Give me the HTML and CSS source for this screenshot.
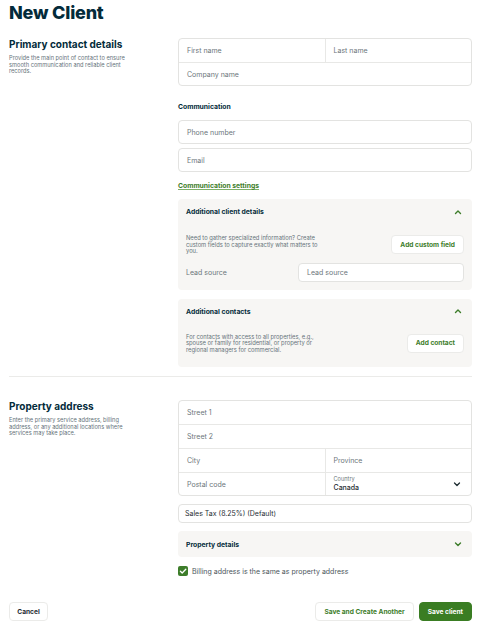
FILE: index.html
```html
<!DOCTYPE html>
<html lang="en">
<head>
<meta charset="utf-8">
<title>New Client</title>
<link rel="stylesheet" href="styles.css">
</head>
<body>
<div class="page">
  <h1 class="title">New Client</h1>

  <section class="section">
    <div class="intro">
      <h2 class="sec-title">Primary contact details</h2>
      <p class="sec-desc">Provide the main point of contact to ensure smooth communication and reliable client records.</p>
    </div>
    <div class="fields">
      <div class="group">
        <div class="row split">
          <div class="cell">First name</div>
          <div class="cell">Last name</div>
        </div>
        <div class="row"><div class="cell">Company name</div></div>
      </div>

      <div class="label">Communication</div>
      <div class="stack">
        <div class="input">Phone number</div>
        <div class="input">Email</div>
      </div>
      <a class="link" href="#">Communication settings</a>

      <div class="panel">
        <div class="panel-head">
          <span>Additional client details</span>
          <svg class="chev" viewBox="0 0 10 10"><path d="M2.5 6.5 L5 4 L7.5 6.5" fill="none" stroke="#3d7d2a" stroke-width="1.4" stroke-linecap="round" stroke-linejoin="round"/></svg>
        </div>
        <div class="panel-body">
          <p class="panel-desc desc-a">Need to gather specialized information? Create custom fields to capture exactly what matters to you.</p>
          <button class="btn btn-sec btn-custom">Add custom field</button>
        </div>
        <div class="lead">
          <span class="lead-label">Lead source</span>
          <div class="input small">Lead source</div>
        </div>
      </div>

      <div class="panel panel-2">
        <div class="panel-head">
          <span>Additional contacts</span>
          <svg class="chev" viewBox="0 0 10 10"><path d="M2.5 6.5 L5 4 L7.5 6.5" fill="none" stroke="#3d7d2a" stroke-width="1.4" stroke-linecap="round" stroke-linejoin="round"/></svg>
        </div>
        <div class="panel-body">
          <p class="panel-desc desc-b">For contacts with access to all properties, e.g., spouse or family for residential, or property or regional managers for commercial.</p>
          <button class="btn btn-sec">Add contact</button>
        </div>
      </div>
    </div>
  </section>

  <hr class="divider">

  <section class="section">
    <div class="intro">
      <h2 class="sec-title">Property address</h2>
      <p class="sec-desc">Enter the primary service address, billing address, or any additional locations where services may take place.</p>
    </div>
    <div class="fields">
      <div class="group">
        <div class="row"><div class="cell">Street 1</div></div>
        <div class="row"><div class="cell">Street 2</div></div>
        <div class="row split">
          <div class="cell">City</div>
          <div class="cell">Province</div>
        </div>
        <div class="row split">
          <div class="cell">Postal code</div>
          <div class="cell select">
            <div class="sel-text">
              <span class="sel-label">Country</span>
              <span class="sel-value">Canada</span>
            </div>
            <svg class="chev dark" viewBox="0 0 10 10"><path d="M2.5 4 L5 6.5 L7.5 4" fill="none" stroke="#1f2d33" stroke-width="1.3" stroke-linecap="round" stroke-linejoin="round"/></svg>
          </div>
        </div>
      </div>

      <div class="input tax">Sales Tax (8.25%) (Default)</div>

      <div class="panel panel-3">
        <div class="panel-head">
          <span>Property details</span>
          <svg class="chev" viewBox="0 0 10 10"><path d="M2.5 4 L5 6.5 L7.5 4" fill="none" stroke="#3d7d2a" stroke-width="1.4" stroke-linecap="round" stroke-linejoin="round"/></svg>
        </div>
      </div>

      <label class="check">
        <span class="box"><svg viewBox="0 0 10 10"><path d="M2.4 5.2 L4.2 7 L7.8 3.2" fill="none" stroke="#fff" stroke-width="1.3" stroke-linecap="round" stroke-linejoin="round"/></svg></span>
        <span>Billing address is the same as property address</span>
      </label>
    </div>
  </section>

  <footer class="footer">
    <button class="btn btn-cancel">Cancel</button>
    <div class="actions">
      <button class="btn btn-sec">Save and Create Another</button>
      <button class="btn btn-primary">Save client</button>
    </div>
  </footer>
</div>
</body>
</html>
```

FILE: styles.css
```css
* { box-sizing: border-box; }
html, body { margin: 0; padding: 0; background: #fff; }
body {
  font-family: Inter, "Noto Sans", "Liberation Sans", sans-serif;
  color: #032b3a;
  font-size: 7px;
}
.page { padding: 3px 8px 0 9px; }
.title {
  margin: 0;
  font-size: 18px;
  line-height: 20px;
  font-weight: 800;
  letter-spacing: -0.2px;
  color: #032b3a;
}
.section {
  display: grid;
  grid-template-columns: 1fr 294px;
  margin-top: 15px;
}
.intro { max-width: 128px; }
.sec-title {
  margin: 0;
  font-size: 10px;
  line-height: 12px;
  font-weight: 700;
  color: #032b3a;
}
.sec-desc {
  margin: 5px 0 0;
  font-size: 5.7px;
  line-height: 6.6px;
  color: #66737a;
}
.fields { display: flex; flex-direction: column; }
.group {
  border: 1px solid #e3e3e1;
  border-radius: 4px;
  background: #fff;
}
.row { display: flex; height: 24px; border-top: 1px solid #e8e8e6; }
.row:first-child { border-top: none; height: 23px; }
.row:last-child { height: 23px; }
.cell {
  flex: 1;
  display: flex;
  align-items: center;
  padding: 0 8px;
  color: #6c767b;
  font-size: 7px;
}
.split .cell + .cell { border-left: 1px solid #e8e8e6; }
.label {
  margin-top: 17px;
  font-size: 6.8px;
  font-weight: 700;
  color: #032b3a;
  line-height: 8px;
}
.stack { display: flex; flex-direction: column; gap: 4px; margin-top: 9px; }
.input {
  height: 24px;
  border: 1px solid #e3e3e1;
  border-radius: 4px;
  background: #fff;
  display: flex;
  align-items: center;
  padding: 0 8px;
  color: #6c767b;
  font-size: 7px;
}
.link {
  margin-top: 9px;
  color: #3d7d2a;
  font-weight: 700;
  font-size: 6.8px;
  line-height: 10px;
  text-decoration: underline;
  text-decoration-color: #7fb069;
  text-underline-offset: 1px;
  align-self: flex-start;
}
.panel {
  margin-top: 8px;
  background: #f7f6f4;
  border-radius: 4px;
  padding: 0 8px 8px;
}
.panel-head {
  height: 25px;
  display: flex;
  align-items: center;
  justify-content: space-between;
  font-weight: 700;
  font-size: 6.8px;
  color: #032b3a;
}
.chev { width: 10px; height: 10px; margin-right: 1px; }
.panel-body {
  display: flex;
  align-items: center;
  justify-content: space-between;
  margin-top: 11px;
}
.panel-desc {
  margin: 0;
  font-size: 5.8px;
  line-height: 6.5px;
  color: #66737a;
}
.desc-a { width: 134px; }
.desc-b { width: 135px; }
.btn {
  font-family: inherit;
  font-weight: 700;
  font-size: 6.6px;
  border-radius: 4px;
  height: 19px;
  padding: 0 8px;
  cursor: pointer;
}
.btn-sec {
  background: #fff;
  border: 1px solid #ebebe9;
  color: #3d7d2a;
}
.lead {
  display: flex;
  align-items: center;
  margin-top: 8px;
}
.lead-label { color: #6c767b; font-size: 7px; width: 112px; }
.input.small { flex: 1; height: 19px; }
.panel-2 { margin-top: 9px; padding-bottom: 14px; }
.panel-2 .panel-body { margin-top: 10px; }
.divider {
  border: none;
  border-top: 1px solid #ebebe9;
  margin: 9px 0 0;
}
.section + .divider + .section { margin-top: 23px; }
.select { justify-content: space-between; padding-right: 8px; }
.sel-text { display: flex; flex-direction: column; }
.sel-label { font-size: 5.6px; color: #6c767b; line-height: 7px; }
.sel-value { font-size: 7px; color: #1f2d33; line-height: 9px; font-weight: 500; }
.chev.dark { width: 10px; height: 10px; }
.tax {
  margin-top: 8px;
  height: 19px;
  color: #1f2d33;
  padding-left: 6px;
}
.panel-3 { padding-bottom: 0; margin-top: 8px; }
.panel-3 .panel-head { height: 26px; }
.check {
  display: flex;
  align-items: center;
  gap: 4px;
  margin-top: 9px;
  color: #4a555a;
  font-size: 7px;
}
.box {
  width: 10px;
  height: 10px;
  border-radius: 2px;
  background: #3d7d2a;
  display: flex;
}
.box svg { width: 10px; height: 10px; }
.footer {
  display: flex;
  justify-content: space-between;
  align-items: center;
  margin-top: 26px;
}
.actions { display: flex; gap: 5px; }
.btn-cancel {
  background: #fff;
  border: 1px solid #ebebe9;
  color: #1f2d33;
  width: 39px;
  padding: 0;
}
.btn-primary {
  background: #3a7d23;
  border: 1px solid #3a7d23;
  color: #fff;
}
```
